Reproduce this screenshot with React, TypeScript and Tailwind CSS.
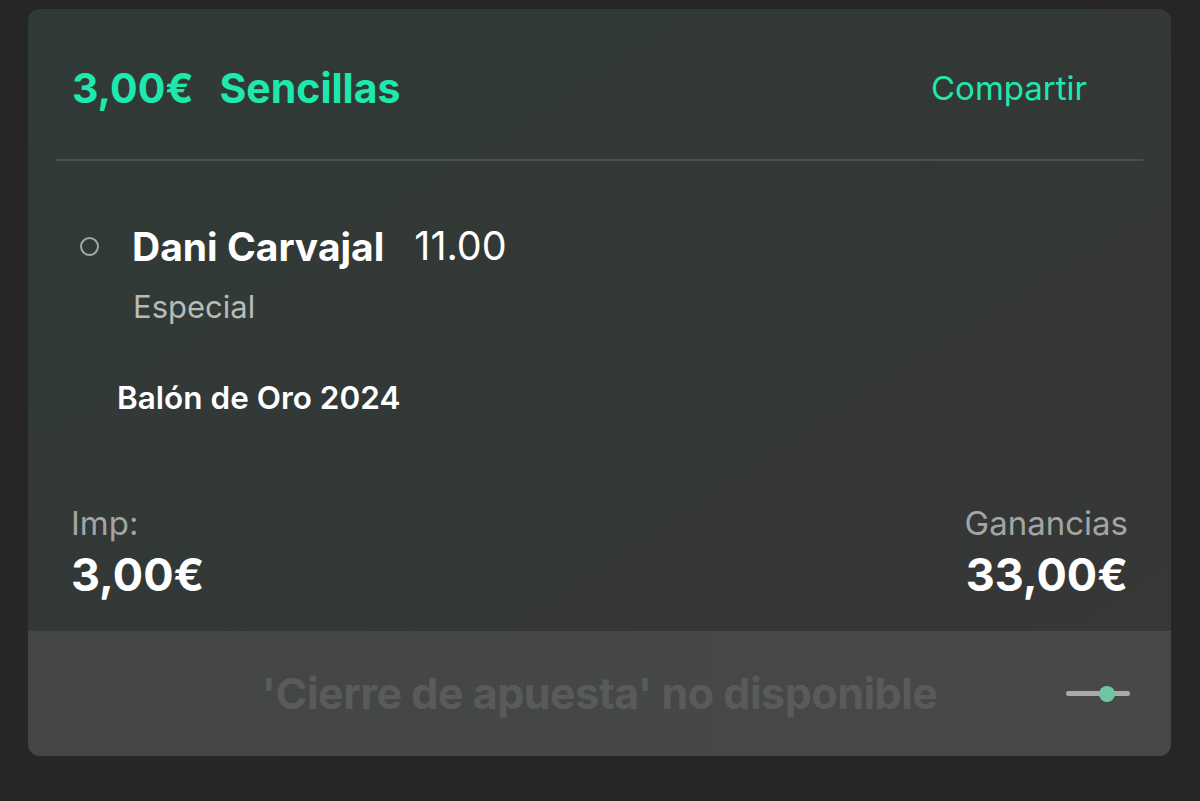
import React from "react";

export default function App() {
  return (
    <div className="w-[1200px] h-[801px] bg-[#262626] pt-[9px] pl-[28px]" style={{ fontFamily: "Inter, 'Noto Sans', sans-serif" }}>
      <div className="w-[1143px] h-[747px] rounded-[12px] overflow-hidden flex flex-col bg-gradient-to-br from-[#303a37] via-[#333836] to-[#373737]">
        {/* header */}
        <div className="h-[150px] flex items-center justify-between pl-[44px] pr-[84px] pt-[8px]">
          <div className="text-[41px] font-bold text-[#1fe8ad] leading-none flex gap-[26px]">
            <span>3,00€</span>
            <span>Sencillas</span>
          </div>
          <div className="text-[33px] text-[#1fe8ad] leading-none">Compartir</div>
        </div>
        <div className="mx-[28px] h-[2px] bg-[#4a504e]" />

        {/* selection */}
        <div className="pl-[52px] pt-[66px] flex items-center">
          <div className="w-[19px] h-[19px] rounded-full border-[2.5px] border-[#a3a6a5]" />
          <div className="ml-[33px] text-[39px] font-bold text-white leading-none">Dani Carvajal</div>
          <div className="ml-[30px] text-[39.5px] text-white leading-none">11.00</div>
        </div>
        <div className="pl-[105px] pt-[24px] text-[31px] text-[#b8bab9] leading-none">Especial</div>
        <div className="pl-[89px] pt-[60px] text-[31.5px] font-semibold text-white leading-none">Balón de Oro 2024</div>

        {/* amounts */}
        <div className="mt-auto flex justify-between px-[43px] pb-[34px]">
          <div className="flex flex-col gap-[12px]">
            <div className="text-[33px] text-[#a3a5a4] leading-none">Imp:</div>
            <div className="text-[45px] font-bold text-white leading-none">3,00€</div>
          </div>
          <div className="flex flex-col items-end gap-[12px]">
            <div className="text-[33px] text-[#a3a5a4] leading-none">Ganancias</div>
            <div className="text-[45px] font-bold text-white leading-none">33,00€</div>
          </div>
        </div>

        {/* footer */}
        <div className="h-[125px] bg-gradient-to-r from-[#434645] to-[#484848] relative flex items-center justify-center">
          <div className="text-[43px] font-bold text-[#595b5a] leading-none tracking-[-0.5px]">'Cierre de apuesta' no disponible</div>
          <div className="absolute right-[41px] top-1/2 -translate-y-1/2 w-[64px] h-[16px] flex items-center">
            <div className="w-full h-[5px] rounded-full bg-[#a9abaa]" />
            <div className="absolute left-[33px] w-[16px] h-[16px] rounded-full bg-[#6fc4a4]" />
          </div>
        </div>
      </div>
    </div>
  );
}
